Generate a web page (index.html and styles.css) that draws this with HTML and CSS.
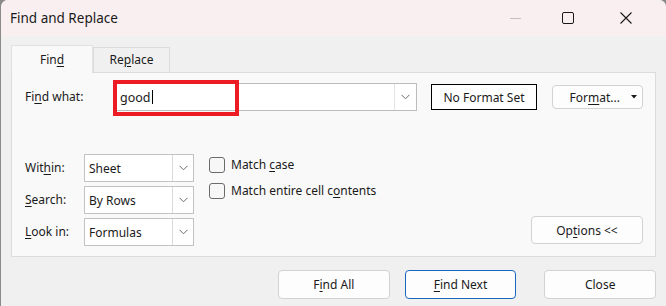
FILE: index.html
```html
<!DOCTYPE html>
<html lang="en">
<head>
    <meta charset="UTF-8">
    <title>Find and Replace</title>
    <link rel="stylesheet" href="styles.css">
</head>
<body>
    <div class="window">
        <div class="titlebar">
            <span class="title">Find and Replace</span>
            <div class="controls">
                <span class="ctl ctl-min">
                    <svg width="12" height="12" viewBox="0 0 12 12"><line x1="0" y1="6.5" x2="11" y2="6.5" stroke="#c4c0c1" stroke-width="1"/></svg>
                </span>
                <span class="ctl ctl-max">
                    <svg width="12" height="12" viewBox="0 0 12 12"><rect x="0.5" y="0.5" width="11" height="11" rx="1.5" fill="none" stroke="#1a1a1a" stroke-width="1"/></svg>
                </span>
                <span class="ctl ctl-close">
                    <svg width="12" height="12" viewBox="0 0 12 12"><path d="M0.5 0.5 L11.5 11.5 M11.5 0.5 L0.5 11.5" stroke="#1a1a1a" stroke-width="1.1" fill="none"/></svg>
                </span>
            </div>
        </div>

        <div class="content">
            <div class="tabs">
                <div class="tab active">Fin<u>d</u></div>
                <div class="tab">Re<u>p</u>lace</div>
            </div>

            <div class="panel">
                <div class="find-row">
                    <span class="label find-label">Fi<u>n</u>d what:</span>
                    <div class="combo">
                        <span class="combo-text">good<span class="caret"></span></span>
                        <span class="combo-btn">
                            <svg width="9" height="6" viewBox="0 0 9 6"><polyline points="0.5,0.8 4.5,4.8 8.5,0.8" fill="none" stroke="#6a6a6a" stroke-width="1"/></svg>
                        </span>
                        <div class="highlight"></div>
                    </div>
                    <div class="format-box">No Format Set</div>
                    <button class="btn format-btn">
                        <span>For<u>m</u>at...</span>
                        <svg width="6" height="4" viewBox="0 0 6 4"><polygon points="0,0 6,0 3,3.5" fill="#1a1a1a"/></svg>
                    </button>
                </div>

                <div class="lower">
                    <div class="selects">
                        <div class="select-row">
                            <span class="label">Wit<u>h</u>in:</span>
                            <div class="select">
                                <span class="select-text">Sheet</span>
                                <span class="select-btn">
                                    <svg width="9" height="6" viewBox="0 0 9 6"><polyline points="0.5,0.8 4.5,4.8 8.5,0.8" fill="none" stroke="#6a6a6a" stroke-width="1"/></svg>
                                </span>
                            </div>
                        </div>
                        <div class="select-row">
                            <span class="label"><u>S</u>earch:</span>
                            <div class="select">
                                <span class="select-text">By Rows</span>
                                <span class="select-btn">
                                    <svg width="9" height="6" viewBox="0 0 9 6"><polyline points="0.5,0.8 4.5,4.8 8.5,0.8" fill="none" stroke="#6a6a6a" stroke-width="1"/></svg>
                                </span>
                            </div>
                        </div>
                        <div class="select-row">
                            <span class="label"><u>L</u>ook in:</span>
                            <div class="select">
                                <span class="select-text">Formulas</span>
                                <span class="select-btn">
                                    <svg width="9" height="6" viewBox="0 0 9 6"><polyline points="0.5,0.8 4.5,4.8 8.5,0.8" fill="none" stroke="#6a6a6a" stroke-width="1"/></svg>
                                </span>
                            </div>
                        </div>
                    </div>

                    <div class="checks">
                        <label class="check"><span class="box"></span><span>Match <u>c</u>ase</span></label>
                        <label class="check"><span class="box"></span><span>Match entire cell c<u>o</u>ntents</span></label>
                    </div>

                    <button class="btn options-btn">Op<u>t</u>ions &lt;&lt;</button>
                </div>
            </div>

            <div class="footer">
                <button class="btn foot-btn">F<u>i</u>nd All</button>
                <button class="btn foot-btn default"><u>F</u>ind Next</button>
                <button class="btn foot-btn close-btn">Close</button>
            </div>
        </div>
    </div>
</body>
</html>
```

FILE: styles.css
```css
/* Reset */
* {
    margin: 0;
    padding: 0;
    box-sizing: border-box;
}

body {
    font-family: 'Noto Sans', 'Open Sans', sans-serif;
    font-size: 12px;
    color: #1a1a1a;
    background-color: #8a8a8a;
    width: 666px;
    height: 306px;
    overflow: hidden;
}

u {
    text-decoration: underline;
    text-underline-offset: 2px;
}

.window {
    width: 665px;
    height: 306px;
    margin-left: 1px;
    background-color: #f0f0f0;
    border-top-left-radius: 7px;
    border-top-right-radius: 7px;
    overflow: hidden;
}

/* Title bar */
.titlebar {
    height: 36px;
    display: flex;
    align-items: center;
    justify-content: space-between;
    background-color: #f9eff1;
    padding-left: 9px;
}

.title {
    font-size: 13.5px;
    color: #1a1a1a;
}

.controls {
    display: flex;
    align-items: center;
    height: 100%;
}

.ctl {
    display: flex;
    align-items: center;
    justify-content: center;
    width: 46px;
    height: 100%;
}

.ctl-min { margin-right: 6px; }
.ctl-max { margin-right: 12px; }
.ctl-close { margin-right: 17px; }

/* Content */
.content {
    padding: 9px 10px 0 10px;
}

.tabs {
    display: flex;
    align-items: flex-end;
    height: 27px;
}

.tab {
    height: 25px;
    padding-top: 3px;
    text-align: center;
    background-color: #f0f0f0;
    border: 1px solid #dcdcdc;
    border-bottom: none;
    width: 77px;
}

.tab.active {
    height: 28px;
    width: 82px;
    padding-top: 5px;
    background-color: #f9f9f9;
    border-color: #e2e2e2;
    position: relative;
    top: 1px;
}

.panel {
    background-color: #f9f9f9;
    border: 1px solid #dcdcdc;
    width: 645px;
    height: 185px;
    padding: 10px 12px 0 13px;
}

.label {
    display: inline-block;
    line-height: 28px;
}

/* Find what row */
.find-row {
    display: flex;
    align-items: center;
    height: 28px;
}

.find-label {
    width: 91px;
}

.combo {
    position: relative;
    display: flex;
    width: 301px;
    height: 28px;
    background-color: #fff;
    border: 1px solid #bcbcbc;
}

.combo-text {
    flex: 1;
    display: flex;
    align-items: center;
    padding-left: 3px;
    font-size: 12.5px;
}

.caret {
    display: inline-block;
    width: 1px;
    height: 14px;
    background-color: #000;
    margin-left: 1px;
}

.combo-btn {
    width: 22px;
    display: flex;
    align-items: center;
    justify-content: center;
    border-left: 1px solid #e3e3e3;
    background-color: #fff;
}

.highlight {
    position: absolute;
    left: -4px;
    top: -4px;
    width: 126px;
    height: 36px;
    border: 4px solid #ed1c24;
    pointer-events: none;
}

.format-box {
    margin-left: 14px;
    width: 106px;
    height: 26px;
    border: 1px solid #000;
    background-color: #fff;
    display: flex;
    align-items: center;
    justify-content: center;
}

/* Buttons */
.btn {
    font-family: inherit;
    font-size: 12px;
    color: #1a1a1a;
    background-color: #fdfdfd;
    border: 1px solid #d2d2d2;
    border-radius: 4px;
    cursor: pointer;
}

.format-btn {
    margin-left: 15px;
    width: 91px;
    height: 24px;
    display: flex;
    align-items: center;
    justify-content: flex-end;
    gap: 11px;
    padding-right: 5px;
}

/* Lower area */
.lower {
    display: flex;
    align-items: flex-end;
    margin-top: 43px;
}

.selects {
    display: flex;
    flex-direction: column;
    gap: 4px;
}

.select-row {
    display: flex;
    align-items: center;
}

.select-row .label {
    width: 59px;
}

.select {
    display: flex;
    width: 110px;
    height: 28px;
    background-color: #fff;
    border: 1px solid #c3c3c3;
}

.select-text {
    flex: 1;
    display: flex;
    align-items: center;
    padding-left: 4px;
}

.select-btn {
    width: 21px;
    display: flex;
    align-items: center;
    justify-content: center;
    border-left: 1px solid #dadada;
}

.checks {
    align-self: flex-start;
    display: flex;
    flex-direction: column;
    gap: 9px;
    margin-left: 15px;
    padding-top: 2px;
}

.check {
    display: flex;
    align-items: center;
    gap: 6px;
    height: 17px;
}

.box {
    display: inline-block;
    width: 16px;
    height: 16px;
    border: 1px solid #6b6b6b;
    border-radius: 3px;
    background-color: #f7f7f7;
}

.options-btn {
    margin-left: auto;
    margin-bottom: 2px;
    width: 112px;
    height: 28px;
}

/* Footer */
.footer {
    display: flex;
    margin-top: 13px;
    padding-left: 267px;
}

.foot-btn {
    width: 112px;
    height: 29px;
}

.foot-btn.default {
    margin-left: 15px;
    border-color: #1668bf;
}

.close-btn {
    margin-left: 28px;
}
```
